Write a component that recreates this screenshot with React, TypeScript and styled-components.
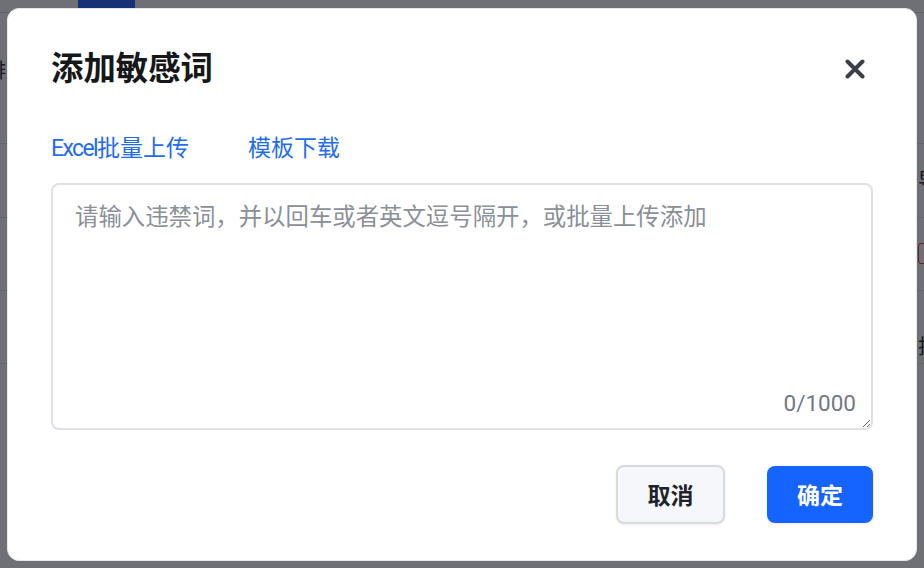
import React from "react";
import styled, { createGlobalStyle } from "styled-components";

const GlobalStyle = createGlobalStyle`
  html, body { margin: 0; padding: 0; }
  body { font-family: Roboto, "Noto Sans CJK SC", sans-serif; background: #fff; }
  * { box-sizing: border-box; }
`;

const Page = styled.div`
  position: relative;
  width: 924px;
  height: 568px;
  overflow: hidden;
  background: #fff;
  display: flex;
  flex-direction: column;
`;

const TopNav = styled.div`
  height: 13px;
  flex-shrink: 0;
  display: flex;
  border-bottom: 1px solid #d5d9df;
`;

const NavTab = styled.div`
  margin-left: 78px;
  width: 57px;
  background: #3370ff;
`;

const Toolbar = styled.div`
  height: 131px;
  flex-shrink: 0;
  padding-top: 47px;
  border-bottom: 1px solid #e3e6ea;
  white-space: nowrap;
`;

const ToolText = styled.span`
  display: inline-block;
  margin-left: -14px;
  font-size: 20px;
  line-height: 22px;
  color: #333;
`;

const TableRow = styled.div<{ $h: number; $pt: number }>`
  height: ${(p) => p.$h}px;
  flex-shrink: 0;
  padding-left: 918px;
  padding-top: ${(p) => p.$pt}px;
  border-bottom: 1px solid #e3e6ea;
  white-space: nowrap;
`;

const CellText = styled.span`
  display: inline-block;
  font-size: 20px;
  line-height: 22px;
  color: #333;
`;

const DangerTag = styled.span`
  display: inline-block;
  width: 60px;
  height: 21px;
  border: 1px solid #e5484d;
  border-radius: 3px;
`;

const Overlay = styled.div`
  position: absolute;
  inset: 0;
  background: rgba(0, 4, 12, 0.57);
  display: flex;
  align-items: center;
  justify-content: center;
`;

const Modal = styled.div`
  width: 910px;
  background: #fff;
  border: 1px solid #e4e7eb;
  border-radius: 12px;
  padding: 40px 43px 36px;
  display: flex;
  flex-direction: column;
`;

const Header = styled.div`
  display: flex;
  align-items: center;
  justify-content: space-between;
  height: 40px;
`;

const Title = styled.h2`
  margin: 0;
  font-size: 32.4px;
  line-height: 40px;
  font-weight: 700;
  color: #151719;
`;

const CloseButton = styled.button`
  width: 36px;
  height: 36px;
  border: none;
  background: transparent;
  padding: 0;
  display: flex;
  align-items: center;
  justify-content: center;
  cursor: pointer;
`;

const Links = styled.div`
  margin-top: 45px;
  display: flex;
  gap: 59px;
  height: 30px;
  align-items: center;
`;

const LinkText = styled.a`
  font-family: Roboto, "Noto Sans CJK SC", sans-serif;
  font-size: 23px;
  line-height: 30px;
  color: #1f6cf0;
  text-decoration: none;
  cursor: pointer;
`;

const LatinWord = styled.span`
  letter-spacing: -1.6px;
`;

const AreaWrap = styled.div`
  position: relative;
  margin-top: 19px;
  height: 247px;
`;

const TextArea = styled.textarea`
  display: block;
  width: 100%;
  height: 100%;
  border: 2px solid #dde1e6;
  border-radius: 8px;
  padding: 15px 22px;
  font-family: Roboto, "Noto Sans CJK SC", sans-serif;
  font-size: 23.4px;
  line-height: 34px;
  color: #1f2329;
  outline: none;
  &::placeholder {
    color: #8a8f98;
  }
`;

const Counter = styled.span`
  position: absolute;
  right: 17px;
  bottom: 14px;
  font-size: 22.5px;
  line-height: 26px;
  color: #727884;
  pointer-events: none;
`;

const Footer = styled.div`
  margin-top: 35px;
  display: flex;
  justify-content: flex-end;
  align-items: center;
  gap: 42px;
`;

const Button = styled.button<{ $primary?: boolean }>`
  width: ${(p) => (p.$primary ? 106 : 109)}px;
  height: ${(p) => (p.$primary ? 57 : 59)}px;
  border-radius: 8px;
  border: ${(p) => (p.$primary ? "none" : "2px solid #d6dbe1")};
  background: ${(p) => (p.$primary ? "#1664ff" : "#f5f7fa")};
  color: ${(p) => (p.$primary ? "#fff" : "#1f2329")};
  font-family: Roboto, "Noto Sans CJK SC", sans-serif;
  font-size: 23px;
  font-weight: 700;
  box-shadow: 0 1px 3px rgba(0, 0, 0, 0.08);
  cursor: pointer;
`;

const CloseIcon = () => (
  <svg width="20" height="20" viewBox="0 0 20 20">
    <path d="M2.5 2.5 L17.5 17.5 M17.5 2.5 L2.5 17.5" stroke="#3b3f48" strokeWidth="4" strokeLinecap="round" />
  </svg>
);

export default function App() {
  return (
    <>
      <GlobalStyle />
      <Page>
        <TopNav>
          <NavTab />
        </TopNav>
        <Toolbar>
          <ToolText>排序</ToolText>
        </Toolbar>
        <TableRow $h={74} $pt={26}>
          <CellText>导出</CellText>
        </TableRow>
        <TableRow $h={73} $pt={25}>
          <DangerTag />
        </TableRow>
        <TableRow $h={73} $pt={45}>
          <CellText>批量</CellText>
        </TableRow>
        <Overlay>
          <Modal>
            <Header>
              <Title>添加敏感词</Title>
              <CloseButton aria-label="关闭">
                <CloseIcon />
              </CloseButton>
            </Header>
            <Links>
              <LinkText>
                <LatinWord>Excel</LatinWord>批量上传
              </LinkText>
              <LinkText>模板下载</LinkText>
            </Links>
            <AreaWrap>
              <TextArea placeholder="请输入违禁词，并以回车或者英文逗号隔开，或批量上传添加" />
              <Counter>0/1000</Counter>
            </AreaWrap>
            <Footer>
              <Button>取消</Button>
              <Button $primary>确定</Button>
            </Footer>
          </Modal>
        </Overlay>
      </Page>
    </>
  );
}
